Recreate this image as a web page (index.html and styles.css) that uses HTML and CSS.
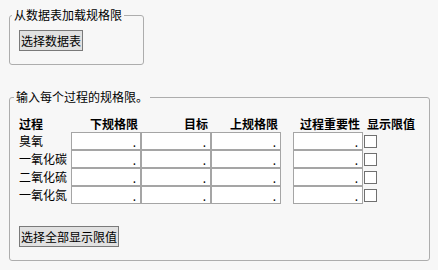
FILE: index.html
```html
<!DOCTYPE html>
<html>
<head>
    <meta charset="UTF-8">
    <title>规格限</title>
    <link rel="stylesheet" href="styles.css">
</head>

<body>
    <fieldset class="group load-group">
        <legend>从数据表加载规格限</legend>
        <button class="btn">选择数据表</button>
    </fieldset>

    <fieldset class="group spec-group">
        <legend>输入每个过程的规格限。</legend>

        <div class="spec-grid">
            <div class="head left">过程</div>
            <div class="head">下规格限</div>
            <div class="head">目标</div>
            <div class="head">上规格限</div>
            <div class="head">过程重要性</div>
            <div class="head show">显示限值</div>

            <div class="name">臭氧</div>
            <input class="val" type="text" value=".">
            <input class="val" type="text" value=".">
            <input class="val" type="text" value=".">
            <input class="val imp" type="text" value=".">
            <input class="chk" type="checkbox">

            <div class="name">一氧化碳</div>
            <input class="val" type="text" value=".">
            <input class="val" type="text" value=".">
            <input class="val" type="text" value=".">
            <input class="val imp" type="text" value=".">
            <input class="chk" type="checkbox">

            <div class="name">二氧化硫</div>
            <input class="val" type="text" value=".">
            <input class="val" type="text" value=".">
            <input class="val" type="text" value=".">
            <input class="val imp" type="text" value=".">
            <input class="chk" type="checkbox">

            <div class="name">一氧化氮</div>
            <input class="val" type="text" value=".">
            <input class="val" type="text" value=".">
            <input class="val" type="text" value=".">
            <input class="val imp" type="text" value=".">
            <input class="chk" type="checkbox">
        </div>

        <button class="btn all-btn">选择全部显示限值</button>
    </fieldset>
</body>

</html>
```

FILE: styles.css
```css
body {
    margin: 0;
    padding: 8px 9px 0;
    background-color: #f7f7f7;
    font-family: "Noto Sans CJK SC", "Noto Sans", sans-serif;
    font-size: 12px;
    line-height: 14px;
    color: #000;
}

/* Группы */
.group {
    margin: 0;
    border: 1px solid #adadad;
    border-radius: 3px;
    box-sizing: border-box;
    min-inline-size: 0;
}

.group legend {
    padding: 0 2px;
    line-height: 14px;
}

.load-group {
    width: 135px;
    padding: 8px 9px 13px;
}

    .load-group legend {
        margin-left: -7px;
    }

.spec-group {
    width: 421px;
    margin-top: 25px;
    padding: 10px 9px 13px;
}

    .spec-group legend {
        margin-left: -5px;
    }

/* Кнопки */
.btn {
    font-family: inherit;
    font-size: 12px;
    line-height: 14px;
    height: 21px;
    padding: 0 1px;
    margin: 0;
    background-color: #e1e1e1;
    color: #000;
    border: 1px solid #7a7a7a;
    border-radius: 0;
    display: block;
}

.all-btn {
    margin-top: 23px;
}

/* Таблица */
.spec-grid {
    display: grid;
    grid-template-columns: 52px 70px 70px 70px 82px 1fr;
    grid-auto-rows: 17px;
    row-gap: 1px;
}

    .spec-grid .head {
        font-weight: bold;
        text-align: right;
        padding-right: 3px;
        align-self: end;
    }

    .spec-grid .head.left {
        text-align: left;
    }

    .spec-grid .head.show {
        text-align: left;
        padding-left: 4px;
        white-space: nowrap;
    }

    .spec-grid .name {
        align-self: center;
        white-space: nowrap;
    }

.val {
    box-sizing: border-box;
    width: 70px;
    height: 18px;
    margin: 0;
    padding: 0 4px 0 0;
    border: 1px solid #a5a5a5;
    background: #fff;
    font-family: inherit;
    font-size: 12px;
    line-height: 14px;
    text-align: right;
    color: #000;
}

.val.imp {
    justify-self: end;
}

.chk {
    appearance: none;
    -webkit-appearance: none;
    width: 13px;
    height: 13px;
    margin: 3px 0 0 1px;
    border: 1px solid #707070;
    background: #fff;
    border-radius: 0;
}
```
